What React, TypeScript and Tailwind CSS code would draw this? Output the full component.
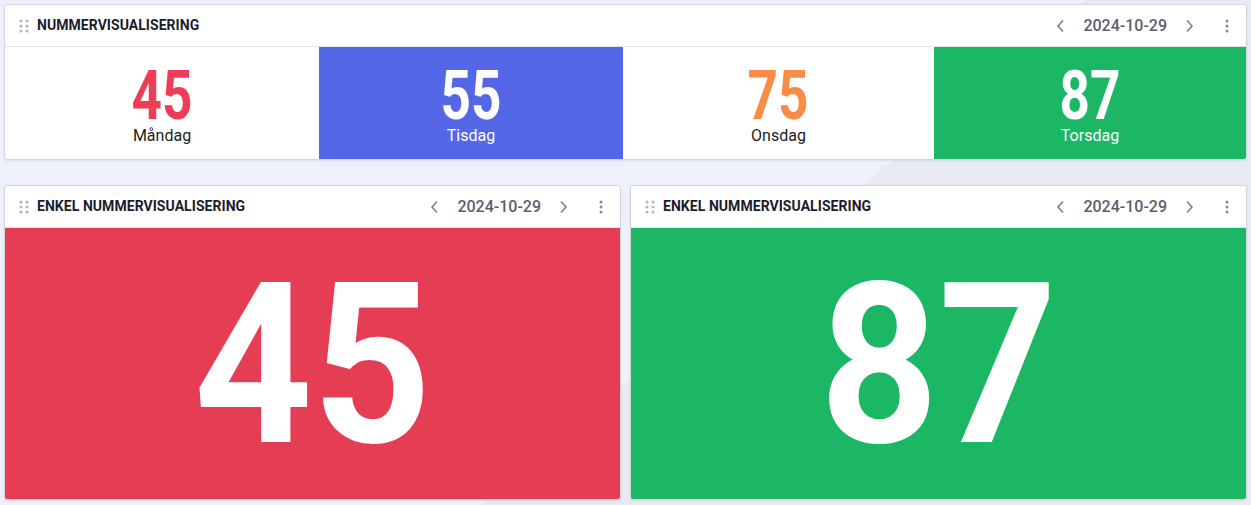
import React from "react";

const Dots = () => (
  <svg width="10" height="14" viewBox="0 0 10 14" className="shrink-0">
    {[0, 1, 2].map((r) =>
      [0, 1].map((c) => (
        <circle key={`${r}-${c}`} cx={2 + c * 6} cy={2 + r * 5} r="1.6" fill="#b5b7bf" />
      ))
    )}
  </svg>
);

const Kebab = () => (
  <svg width="4" height="14" viewBox="0 0 4 14">
    <circle cx="2" cy="2" r="1.5" fill="#8a8d96" />
    <circle cx="2" cy="7" r="1.5" fill="#8a8d96" />
    <circle cx="2" cy="12" r="1.5" fill="#8a8d96" />
  </svg>
);

const Chevron = ({ dir }: { dir: "l" | "r" }) => (
  <svg width="10" height="14" viewBox="0 0 10 14">
    <path
      d={dir === "l" ? "M7 1.5 L2 7 L7 12.5" : "M3 1.5 L8 7 L3 12.5"}
      fill="none"
      stroke="#7d808a"
      strokeWidth="1.6"
    />
  </svg>
);

const Header = ({ title }: { title: string }) => (
  <div className="flex h-[42px] items-center border-b border-[#e3e4ea] pl-[14px] pr-[17px]">
    <Dots />
    <div className="ml-[8px] text-[14px] font-bold tracking-[0.05px] text-[#1b1d2c]">{title}</div>
    <div className="ml-auto flex items-center">
      <Chevron dir="l" />
      <div className="mx-[17px] text-[16px] font-medium text-[#5b5e6b]">2024-10-29</div>
      <Chevron dir="r" />
      <div className="ml-[31px]">
        <Kebab />
      </div>
    </div>
  </div>
);

const Cell = ({ n, label, cls, numColor, labelColor }: { n: string; label: string; cls: string; numColor: string; labelColor: string }) => (
  <div className={`flex flex-col items-center pt-[21px] ${cls}`}>
    <div className={`inline-block h-[56px] scale-x-[0.78] text-[68px] font-bold leading-[56px] ${numColor}`}>{n}</div>
    <div className={`mt-[2px] text-[16px] leading-[20px] ${labelColor}`}>{label}</div>
  </div>
);

export default function App() {
  return (
    <div
      className="relative h-[505px] w-[1251px] overflow-hidden bg-[#eef1fc] p-[4px]"
      style={{ fontFamily: "Roboto, 'Noto Sans', sans-serif" }}
    >
      <div className="absolute inset-0 bg-[#e8eaf3] [clip-path:polygon(1085px_0,1251px_0,1251px_505px,480px_505px)]" />
      <div className="relative overflow-hidden rounded-[3px] border border-[#d4d6de] bg-white shadow-[0_1px_2px_rgba(0,0,0,0.08)]">
        <Header title="NUMMERVISUALISERING" />
        <div className="flex h-[112px]">
          <Cell n="45" label="Måndag" cls="w-[314px] bg-white" numColor="text-[#ef3d58]" labelColor="text-[#222]" />
          <Cell n="55" label="Tisdag" cls="w-[304px] bg-[#5468e7]" numColor="text-white" labelColor="text-white" />
          <Cell n="75" label="Onsdag" cls="w-[311px] bg-white" numColor="text-[#fb8c45]" labelColor="text-[#222]" />
          <Cell n="87" label="Torsdag" cls="flex-1 bg-[#1bb764]" numColor="text-white" labelColor="text-white" />
        </div>
      </div>
      <div className="relative mt-[25px] flex gap-[9px]">
        {[
          { n: "45", bg: "bg-[#e53e54]" },
          { n: "87", bg: "bg-[#1bb764]" },
        ].map((c, i) => (
          <div key={i} className="flex-1 overflow-hidden rounded-[3px] border border-[#d4d6de] bg-white shadow-[0_1px_2px_rgba(0,0,0,0.08)]">
            <Header title="ENKEL NUMMERVISUALISERING" />
            <div className={`flex h-[271px] items-center justify-center ${c.bg}`}>
              <div className="inline-block translate-y-[2px] scale-x-[0.925] text-[224px] font-bold leading-none text-white">{c.n}</div>
            </div>
          </div>
        ))}
      </div>
    </div>
  );
}
